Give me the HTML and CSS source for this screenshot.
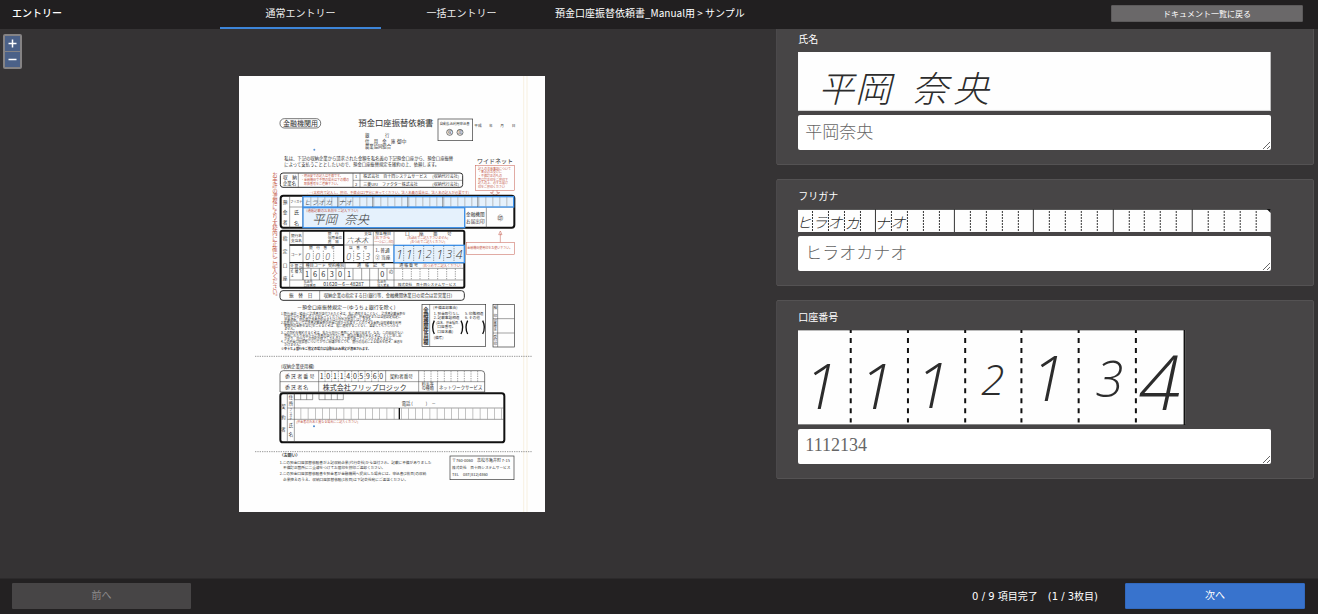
FILE: index.html
```html
<!DOCTYPE html>
<html lang="ja">
<head>
<meta charset="utf-8">
<title>エントリー</title>
<link rel="stylesheet" href="styles.css">
</head>
<body>
<header class="topbar">
  <h1 class="brand">エントリー</h1>
  <nav class="tabs">
    <a class="tab tab-active" href="#normal">通常エントリー</a>
    <a class="tab" href="#batch">一括エントリー</a>
  </nav>
  <p class="crumb">預金口座振替依頼書_Manual用 &gt; サンプル</p>
  <button class="btn btn-back" type="button">ドキュメント一覧に戻る</button>
</header>

<main class="workspace">
  <section class="viewer">
    <div class="zoomer">
      <button class="zoom-btn" type="button" aria-label="拡大"><svg viewBox="0 0 15 15"><path d="M7.500 3.500v8M3.500 7.500h8"/></svg></button>
      <button class="zoom-btn" type="button" aria-label="縮小"><svg viewBox="0 0 15 15"><path d="M3.500 7.500h8"/></svg></button>
    </div>
    <svg class="sheet" viewBox="0 0 918 1308" role="img" aria-label="預金口座振替依頼書">
      <rect width="918" height="1308" fill="#fefefe"/>
      <path class="fold" d="M854 0V1308M864 0V1308"/>

      <!-- heading -->
      <rect class="box" x="123" y="128" width="122" height="28" rx="13"/>
      <text x="132" y="149" class="t21">金融機関用</text>
      <text x="358" y="150" class="t25">預金口座振替依頼書</text>
      <rect class="box" x="597" y="129" width="104" height="65"/>
      <text x="602" y="147" class="t10">自動払込利用申込書</text>
      <circle class="box" cx="632" cy="169" r="9"/><circle class="box" cx="663" cy="169" r="9"/>
      <text x="626" y="173" class="t12">収</text><text x="657" y="173" class="t12">加</text>
      <text x="706" y="154" class="t11">平成</text><text x="750" y="154" class="t11">年</text><text x="784" y="154" class="t11">月</text><text x="818" y="154" class="t11">日</text>
      <text x="378" y="184" class="t13">銀</text><text x="438" y="184" class="t13">行</text>
      <text x="378" y="200" class="t13">信　用　金　庫</text><text x="474" y="200" class="t14">御中</text>
      <text x="378" y="216" class="t13">農業協同組合</text>
      <circle cx="226" cy="221" r="3" fill="#5a94d6"/>
      <text x="136" y="252" class="t13">私は、下記の収納企業から請求された金額を私名義の下記預金口座から、預金口座振替</text>
      <text x="136" y="271" class="t13">によって支払うこととしたいので、預金口座振替規定を確約の上、依頼します。</text>
      <text x="714" y="260" class="t18">ワイドネット</text>
      <g class="red">
        <rect class="box red-box" x="709" y="268" width="118" height="75"/>
        <text x="717" y="281" class="t9">記入の注意事項について</text>
        <text x="717" y="292" class="t9">・黒点のお受けに</text><text x="717" y="303" class="t9">・不備訂正のもの</text>
        <text x="717" y="314" class="t9">等は訂正印をご捺印下</text><text x="717" y="325" class="t9">記入の上、必ずお届け</text><text x="717" y="336" class="t9">印をご捺印ください</text>
        <path class="line" d="M762 343V350H754L768 358L782 350H774V343"/>
        <text x="108" y="288" class="t16 vert">お手許の濃複により太枠内に正確にご記入ください。</text>
      </g>
      <rect class="box mid" x="124" y="291" width="547" height="43" rx="8"/>
      <path class="line" d="M178 291V334M342 291V334M363 291V334M342 313H671"/>
      <text x="132" y="308" class="t14">収　納</text><text x="132" y="328" class="t13">企業名</text>
      <g class="red"><text x="186" y="304" class="t9">・明治安での記入は不備です。</text><text x="186" y="316" class="t9">・金融機関で予期の場合は下の欄の</text><text x="186" y="328" class="t9">　取扱番号をご連絡下さい。</text></g>
      <text x="348" y="307" class="t12">1</text><text x="348" y="329" class="t12">2</text>
      <text x="373" y="307" class="t12">株式会社　百十四システムサービス</text><text x="580" y="307" class="t12">(収納代行会社)</text>
      <text x="373" y="329" class="t12">三菱UFJ　ファクター株式会社</text><text x="580" y="329" class="t12">(収納代行会社)</text>

      <!-- account holder and account number -->
      <g transform="translate(78 327)">
        <text x="122" y="27" class="t10 red">┌─(太枠内で記入し、捺印、不備点は1字分に直ってください。法人名義の場合は、法人名の記入が必要です)</text>
        <rect class="box heavy" x="47" y="32" width="701" height="96" rx="8"/>
        <path class="line" d="M74 32V128M113 32V128M74 66H748M599 67V128M664 67V128"/>
        <text x="53" y="56" class="t14">預</text><text x="53" y="86" class="t14">金</text><text x="53" y="116" class="t14">者</text>
        <text x="76" y="53" class="t9">フリガナ</text><text x="87" y="88" class="t15">氏</text><text x="87" y="119" class="t15">名</text>
        <rect class="field" x="114" y="35" width="632" height="31"/>
        <path class="cells" d="M137 50H746"/>
        <path class="line" d="M218 35V66M323 35V66M428 35V66M533 35V66M638 35V66"/>
        <text x="117" y="59" class="hand t21">ヒ</text><text x="138" y="59" class="hand t21">ラ</text><text x="158" y="59" class="hand t21">オ</text><text x="180" y="59" class="hand t21">カ</text><text x="220" y="59" class="hand t21">ナ</text><text x="241" y="59" class="hand t21">オ</text>
        <rect class="field" x="114" y="68" width="485" height="60"/>
        <text x="124" y="80" class="t10 red">(通帳記載のお名前をご記入下さい)</text>
        <text x="142" y="118" class="hand t37">平岡</text><text x="238" y="118" class="hand t37">奈央</text>
        <text x="603" y="92" class="t14">金融機関</text><text x="603" y="115" class="t14">お届出印</text>
        <text x="697" y="105" class="t18">㊞</text>

        <rect class="box heavy" x="47" y="137" width="551" height="171" rx="5"/>
        <path class="line" d="M74 137V308M114 137V285M236 137V233M325 137V233M387 137V233M74 180H387M74 285H598M74 250H598"/>
        <path class="line strong" d="M74 180H236V233M236 137V233M74 233H598"/>
        <text x="53" y="164" class="t14">指</text><text x="53" y="204" class="t14">定</text><text x="53" y="246" class="t14">口</text><text x="53" y="284" class="t14">座</text>
        <text x="78" y="156" class="t11">銀行名</text><text x="78" y="171" class="t11">支店名</text><text x="77" y="212" class="t11">コード</text>
        <text x="188" y="150" class="t11">銀　行</text><text x="188" y="162" class="t11">信用金庫</text><text x="188" y="174" class="t11">農　協</text>
        <text x="244" y="173" class="hand t22">六本木</text><text x="298" y="150" class="t11">支店</text>
        <text x="330" y="150" class="t12">預金種目</text><text x="328" y="163" class="t11 red">(右下から</text><text x="328" y="174" class="t11 red">一つに○印)</text>
        <text x="420" y="151" class="t14">口　　座　　番　　号</text><text x="427" y="163" class="t9 red">(右詰めでご記入下さいません)</text><text x="436" y="174" class="t9 red">(左つめでご記入ください)</text>
        <text x="132" y="192" class="t11">銀　行　番　号</text><text x="252" y="192" class="t11">店　番　号</text>
        <path class="line dash" d="M145 197V232M175 197V232M206 197V232M266 197V232M296 197V232"/>
        <text x="121" y="225" class="hand t26">0</text><text x="151" y="225" class="hand t26">0</text><text x="181" y="225" class="hand t26">0</text>
        <text x="244" y="225" class="hand t26">0</text><text x="272" y="225" class="hand t26">5</text><text x="301" y="225" class="hand t26">3</text>
        <text x="331" y="200" class="t14">1. 普通</text><text x="331" y="223" class="t14">② 当座</text>
        <rect class="field" x="387" y="181" width="211" height="52"/>
        <path class="line dash" d="M416 182V232M446 182V232M476 182V232M506 182V232M536 182V232M567 182V232"/>
        <text x="393" y="222" class="hand t37">1</text><text x="422" y="222" class="hand t37">1</text><text x="453" y="222" class="hand t37">1</text><text x="482" y="218" class="hand t32">2</text><text x="514" y="222" class="hand t37">1</text><text x="544" y="220" class="hand t32">3</text><text x="572" y="222" class="hand t37">4</text>
        <path class="line" d="M114 233V285M240 233V250M314 250V308M387 233V308"/>
        <text x="81" y="236" class="t10 vert">ゆうちょ</text><text x="94" y="236" class="t10 vert">銀行欄</text><text x="107" y="236" class="t10 vert">ご記入</text>
        <text x="122" y="247" class="t12">種目コード</text><text x="189" y="247" class="t12">契約種別</text><text x="276" y="247" class="t12">通　帳　記　号</text><text x="403" y="247" class="t12">通 帳 番 号</text><text x="473" y="247" class="t10 red">(右つめでご記入ください)</text>
        <path class="line" d="M138 250V285M163 250V285M188 250V285M213 250V285M239 250V285M264 250V285M290 250V285M340 250V285M366 250V285"/>
        <path class="line dash" d="M413 251V285M439 251V285M465 251V285M491 251V285M518 251V285M545 251V285M571 251V285"/>
        <text x="120" y="276" class="t22">1</text><text x="144" y="276" class="t22">6</text><text x="169" y="276" class="t22">6</text><text x="194" y="276" class="t22">3</text><text x="219" y="276" class="t22">0</text><text x="246" y="276" class="t22">1</text><text x="346" y="276" class="t22">0</text><text x="371" y="265" class="t14">の</text>
        <text x="116" y="295" class="t9">払込先</text><text x="116" y="305" class="t9">口座番号</text><text x="175" y="303" class="t15">01620－6－48287</text><text x="337" y="295" class="t9">払込先</text><text x="337" y="305" class="t9">加入者名</text><text x="398" y="303" class="t11">株式会社　百十四システムサービス</text>
        <g class="red"><path class="line" d="M706 172V145M701 149L706 138L711 149Z"/><rect class="box red-box" x="604" y="172" width="144" height="36"/><text x="607" y="193" class="t9">金融機関使用印をお使い下さい。</text></g>

        <rect class="box mid" x="45" y="317" width="553" height="29" rx="9"/>
        <path class="line" d="M164 317V346"/>
        <text x="72" y="336" class="t14">振　替　日</text><text x="176" y="336" class="t13">収納企業の指定する日(銀行等、金融機関休業日の場合は翌営業日)</text>
      </g>

      <!-- terms -->
      <g transform="translate(78 642)">
        <text x="96" y="57" class="t15">－預金口座振替規定－(ゆうちょ銀行を除く)</text>
        <g class="terms">
          <text x="48" y="74">1.銀行(金庫・組合)に請求書が送付されたときは、私に通知することなく、請求書記載金額を</text>
          <text x="58" y="83">口座から引き落しのうえ支払ってください。この場合、預金規定または当座勘定規定に</text>
          <text x="58" y="92">預金通帳、同払戻請求書の提出または小切手の振出しはしません。</text>
          <text x="48" y="103">2.振替日において請求書記載金額が預金口座から払戻すことのできる金額(当座貸越を利用</text>
          <text x="58" y="112">範囲内の金額を含む)をこえるときは、私に通知することなく、返却してもさしつかえ</text>
          <text x="58" y="121">ません。</text>
          <text x="48" y="131">3.この契約を解約するときは、私から貴行に書面により届け出ます。なお、この届出がない</text>
          <text x="58" y="140">期間にわたり会社から請求書の送付がない等、相当の事由があるときは、とくに申し出</text>
          <text x="58" y="149">かぎり、貴行はこの契約が終了したものとして取り扱ってさしつかえありません。</text>
          <text x="48" y="159">4.この預金口座振替についてかりに紛議が生じても、銀行の責めによる場合を除き、迷惑を</text>
          <text x="58" y="168">かけません。</text>
          <text x="48" y="180" class="bold">※ゆうちょ銀行をご指定の場合は自動払込み規定が適用されます。</text>
        </g>
        <rect class="box" x="471" y="43" width="191" height="126"/><path class="line" d="M494 43V169"/>
        <text x="483" y="52" class="t16 vert bold">金融機関使用欄</text>
        <text x="504" y="57" class="t11">(不備返却事由)</text><text x="506" y="74" class="t11">1. 預金取引なし</text><text x="600" y="74" class="t11">5. 印鑑相違</text><text x="506" y="88" class="t11">2. 記載事項相違</text><text x="600" y="88" class="t11">6. その他</text>
        <text x="513" y="102" class="t9">(店名、預金種目、</text><text x="517" y="115" class="t11">口座番号、</text><text x="517" y="129" class="t11">口座名義)</text><text x="506" y="146" class="t11">(備考)</text>
        <path class="line strong" d="M508 92Q498 112 508 132M588 92Q598 112 588 132M608 92Q598 112 608 132M653 92Q663 112 653 132"/>
        <rect class="box" x="684" y="43" width="64" height="128"/><path class="line" d="M698 43V171M684 86H748M684 129H748"/>
        <text x="691" y="48" class="t11 vert">検　印</text><text x="691" y="89" class="t9 vert">印鑑照合</text><text x="691" y="133" class="t11 vert">受付印</text>
      </g>

      <path class="perforation" d="M48 841H878M48 1127H878"/>

      <!-- contractor -->
      <g transform="translate(78 837)">
        <text x="48" y="38" class="t13">(収納企業使用欄)</text>
        <path class="box" d="M45 111V57Q45 47 55 47H649Q659 47 659 57V111Z"/>
        <path class="line" d="M161 47V111M45 80H659M362 47V80M461 47V111M517 80V111"/>
        <text x="60" y="69" class="t15">委 託 者 番 号</text><text x="374" y="69" class="t14">契約者番号</text>
        <text x="164" y="72" class="t21">1</text><text x="184" y="72" class="t21">0</text><text x="204" y="72" class="t21">1</text><text x="224" y="72" class="t21">1</text><text x="244" y="72" class="t21">4</text><text x="264" y="72" class="t21">0</text><text x="283" y="72" class="t21">5</text><text x="303" y="72" class="t21">9</text><text x="323" y="72" class="t21">6</text><text x="343" y="72" class="t21">0</text>
        <path class="line dash" d="M180 48V80M200 48V80M220 48V80M240 48V80M260 48V80M280 48V80M300 48V80M320 48V80M340 48V80M478 48V80M498 48V80M518 48V80M538 48V80M558 48V80M578 48V80M598 48V80M618 48V80M638 48V80"/>
        <text x="60" y="103" class="t15">委 託 者 名</text><text x="173" y="105" class="t21">株式会社フリップロジック</text><text x="470" y="93" class="t12">料金等</text><text x="470" y="106" class="t12">の種類</text><text x="522" y="103" class="t13">ネットワークサービス</text>
        <rect class="box heavy" x="46" y="115" width="672" height="147" rx="8"/>
        <path class="line" d="M67 115V262M88 115V262M67 159H718M67 193H718M88 117V134H143V117M107 117V134M125 117V134M162 117V134H235V117M180 117V134M199 117V134M217 117V134"/>
        <path class="cells wide" d="M107 176H716"/><path class="line strong" d="M403 159V193"/>
        <text x="49" y="158" class="t13">契</text><text x="49" y="193" class="t13">約</text><text x="49" y="227" class="t13">者</text><text x="71" y="133" class="t13">住</text><text x="71" y="150" class="t13">所</text><text x="77" y="159" class="t9 vert">フリガナ</text><text x="71" y="215" class="t13">氏</text><text x="71" y="244" class="t13">名</text>
        <text x="410" y="151" class="t13">電話 (　　　)　－</text><text x="94" y="204" class="t9 red">(預金者の氏名と異なる場合にご記入ください)</text>
        <circle cx="147" cy="214" r="3" fill="#4a88ce"/>
        <text x="44" y="306" class="t12 bold">〈お願い〉</text>
        <text x="44" y="327" class="t11">1.この預金口座振替依頼書が上記収納企業(代行会社)から送付され、記載に不備がありました</text><text x="54" y="343" class="t11">不備訂正箇所に二重線をつけてお届印を捺印ご返却ください。</text>
        <text x="44" y="361" class="t11">2.この預金口座振替依頼書を預金者が金融機関へ提出した場合には、申込書(2枚目)の収納</text><text x="54" y="378" class="t11">企業控えのうえ、収納口座振替依頼(1枚目)は下記会社宛にご返送ください。</text>
        <rect class="box" x="555" y="303" width="192" height="71"/>
        <text x="561" y="322" class="t12">〒760-0060　高松市亀井町 7-15</text><text x="561" y="343" class="t11">株式会社　百十四システムサービス</text><text x="561" y="363" class="t12">TEL　087(812)4860</text>
      </g>
    </svg>
  </section>

  <form class="entries" id="normal">
    <div class="card">
      <label class="card-label" for="name">氏名</label>
      <svg class="snip" viewBox="0 0 473 59" role="img" aria-label="氏名の記入欄">
        <rect width="473" height="59" fill="#fefefe"/><path d="M0 58.500H473" stroke="#d5d5d5"/>
        <g class="ink ink-kanji"><text x="38" y="50">平</text><text x="75" y="50">岡</text><text x="132" y="50">奈</text><text x="173" y="50">央</text></g>
      </svg>
      <textarea class="entry" id="name" rows="1" placeholder="平岡奈央"></textarea>
    </div>
    <div class="card">
      <label class="card-label" for="kana">フリガナ</label>
      <svg class="snip" viewBox="0 0 473 23" role="img" aria-label="フリガナの記入欄">
        <rect width="473" height="23" fill="#fefefe"/><path d="M0 .500H473" stroke="#555"/><path d="M469 0H473V4Z" fill="#111"/>
        <path d="M14.500 2V23M30.500 2V23M46.500 2V23M62.500 2V23M93.500 2V23M109.500 2V23M125.500 2V23M141.500 2V23M172.500 2V23M188.500 2V23M204.500 2V23M220.500 2V23M251.500 2V23M267.500 2V23M283.500 2V23M299.500 2V23M331.500 2V23M346.500 2V23M362.500 2V23M378.500 2V23M410.500 2V23M426.500 2V23M442.500 2V23M458.500 2V23" stroke="#333" stroke-dasharray="2 1"/>
        <path d="M77.500 0V23M156.500 0V23M235.500 0V23M315.500 0V23M394.500 0V23" stroke="#333"/>
        <g class="ink ink-kana"><text x="6" y="19">ヒ</text><text x="22" y="19">ラ</text><text x="37" y="19">オ</text><text x="54" y="20">カ</text><text x="84" y="20">ナ</text><text x="100" y="19">オ</text></g>
      </svg>
      <textarea class="entry" id="kana" rows="1" placeholder="ヒラオカナオ"></textarea>
    </div>
    <div class="card">
      <label class="card-label" for="account">口座番号</label>
      <svg class="snip snip-digits" viewBox="0 0 386 95" role="img" aria-label="口座番号の記入欄">
        <rect width="386" height="95" fill="#fefefe"/>
        <path d="M0 .500H386" stroke="#bbb"/><path d="M0 94.500H386" stroke="#111"/><path d="M385 0V95" stroke="#111" stroke-width="2"/>
        <path d="M52.500 0V92M109.500 0V92M166.500 0V92M222.500 0V92M279.500 0V92M336.500 0V92" stroke="#111" stroke-width="2" stroke-dasharray="5 5" stroke-dashoffset="2"/>
        <g class="ink ink-digit"><text x="23" y="79">1</text><text x="78" y="79">1</text><text x="134" y="78">1</text><text x="194" y="65" class="small">2</text><text x="249" y="71">1</text><text x="310" y="67" class="medium">3</text><text x="360" y="80" class="large">4</text></g>
      </svg>
      <textarea class="entry entry-number" id="account" rows="1" placeholder="1112134"></textarea>
    </div>
  </form>
</main>

<footer class="bottombar">
  <button class="btn btn-prev" type="button" disabled>前へ</button>
  <p class="progress">0 / 9 項目完了　(1 / 3枚目)</p>
  <button class="btn btn-next" type="button">次へ</button>
</footer>
</body>
</html>
```
FILE: styles.css
```css
* { box-sizing: border-box; }

body {
  margin: 0;
  height: 100vh;
  display: flex;
  flex-direction: column;
  overflow: hidden;
  background: #353334;
  color: #fff;
  font: 10px/16px "Noto Sans CJK JP", sans-serif;
}

h1, p { margin: 0; font-size: inherit; }
button { font: inherit; color: inherit; padding: 0; }

/* top bar */
.topbar {
  flex: none;
  display: flex;
  align-items: center;
  height: 29px;
  padding-right: 15px;
  background: #211f20;
}
.brand { width: 220px; padding: 0 0 3px 12px; font-weight: 500; }
.tabs { display: flex; align-self: stretch; }
.tab {
  width: 161px;
  padding-top: 5px;
  border-bottom: 2px solid transparent;
  color: #eee;
  text-align: center;
  text-decoration: none;
}
.tab-active { border-color: #3d85d8; }
.crumb { flex: 1; padding: 0 0 4px 13px; }

.btn { border: 1px solid transparent; border-radius: 1px; }
.btn-back {
  width: 192px;
  height: 17px;
  margin-bottom: 2px;
  font-size: 8px;
  line-height: 14px;
  background: #6a6869;
  border-color: #5c5a5b;
}

/* workspace */
.workspace { flex: 1; min-height: 0; display: flex; }
.viewer {
  position: relative;
  flex: 1;
  display: flex;
  align-items: center;
  justify-content: center;
  padding: 0 0 20px 8px;
}
.zoomer {
  position: absolute;
  top: 5px;
  left: 3px;
  display: grid;
  gap: 1px;
  padding: 2px;
  border-radius: 2px;
  background: #858384;
}
.zoom-btn {
  width: 15px;
  height: 15px;
  border: 0;
  background: #4b6188;
}
.zoom-btn svg { display: block; fill: none; stroke: #fff; stroke-width: 1.500; }
.sheet { width: 306px; }

/* scanned form */
.sheet text { fill: #333; }
.sheet .red text, .sheet text.red { fill: #c4594a; }
.fold { fill: none; stroke: #f4ead2; stroke-width: 2; }
.box { fill: none; stroke: #333; stroke-width: 2; }
.line { fill: none; stroke: #444; stroke-width: 1.500; }
.mid { stroke-width: 3; }
.heavy { stroke: #111; stroke-width: 6; }
.strong { stroke: #111; stroke-width: 4; }
.dash { stroke-dasharray: 4 3; }
.red .line, .red-box { stroke: #c4594a; stroke-width: 1.500; fill: none; }
.field { fill: #e5f1fc; stroke: #3d90e8; stroke-width: 4; }
.cells { fill: none; stroke: #888; stroke-width: 29; stroke-dasharray: 1.500 19.500; }
.cells.wide { stroke-width: 33; stroke-dasharray: 1.500 20; }
.perforation { fill: none; stroke: #666; stroke-width: 2; stroke-dasharray: 4 3; }
.vert { writing-mode: vertical-rl; }
.bold { font-weight: 700; }
.terms text { font-size: 9px; }
.t9 { font-size: 9px; }
.t10 { font-size: 10px; }
.t11 { font-size: 11px; }
.t12 { font-size: 12px; }
.t13 { font-size: 13px; }
.t14 { font-size: 14px; }
.t15 { font-size: 15px; }
.t16 { font-size: 16px; }
.t18 { font-size: 18px; }
.t21 { font-size: 21px; }
.t22 { font-size: 22px; }
.t25 { font-size: 25px; }
.t26 { font-size: 26px; }
.t32 { font-size: 32px; }
.t37 { font-size: 37px; }
.hand { font-family: "Open Sans", "Noto Sans CJK JP", sans-serif; font-style: italic; font-weight: 300; }

/* entry cards */
.entries {
  width: 41.1%;
  margin-top: -7px;
  padding-right: 2px;
  clip-path: inset(7px 0 0 0);
}
.card {
  margin: 0 2px 14px 0;
  padding: 8px 42px 14px 21px;
  border: 1px solid #545253;
  border-radius: 2px;
  background: #474546;
}
.card-label { display: block; margin-bottom: 5px; }
.snip { display: block; width: 100%; margin-bottom: 4px; }
.snip-digits { width: 82%; }
.entry {
  display: block;
  width: 100%;
  height: 35px;
  padding: 4px 7px;
  border: 0;
  border-radius: 2px;
  background: #fff;
  color: #555;
  font: 17px/24px "Noto Sans CJK JP", sans-serif;
  font-weight: 300;
  resize: both;
  overflow: hidden;
}
.entry::placeholder { color: #666; }
.entry-number { font-family: "Liberation Serif", serif; font-size: 18px; }

.ink text { fill: #2c2c2c; text-anchor: middle; font-family: "Open Sans", "Noto Sans CJK JP", sans-serif; font-style: italic; font-weight: 300; }
.ink-kanji text { font-size: 36px; }
.ink-kana text { font-size: 15px; }
.ink-digit text { font-size: 62px; }
.ink-digit .small { font-size: 42px; }
.ink-digit .medium { font-size: 50px; }
.ink-digit .large { font-size: 76px; }

/* bottom bar */
.bottombar {
  flex: none;
  display: flex;
  align-items: flex-start;
  height: 36px;
  padding: 4px 13px 0 12px;
  border-top: 1px solid #2c2a2b;
  background: #232122;
}
.btn-prev, .btn-next { width: 179px; height: 26px; line-height: 20px; padding-bottom: 3px; }
.btn-prev { background: #474546; color: #8d8b8c; }
.btn-next { width: 180px; background: #3873cd; border-color: #3269be; }
.progress {
  flex: 1;
  padding: 6px 27px 0 0;
  text-align: right;
  font-family: "DejaVu Sans", "Noto Sans CJK JP", sans-serif;
}
```
